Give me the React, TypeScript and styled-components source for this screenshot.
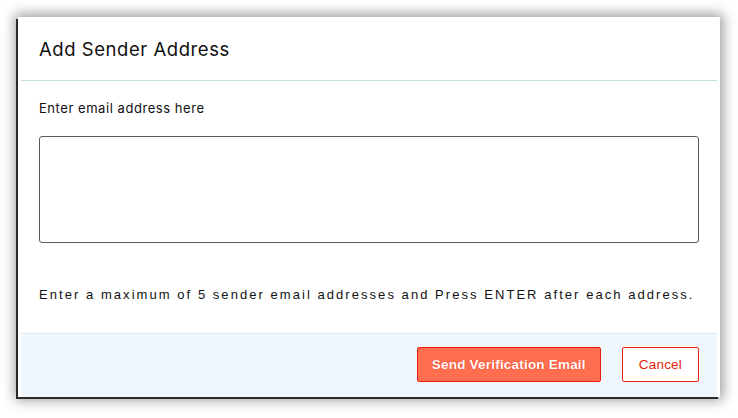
import React, { useState } from 'react';
import styled, { createGlobalStyle } from 'styled-components';

const GlobalStyle = createGlobalStyle`
  html, body {
    margin: 0;
    padding: 0;
    background: #ffffff;
  }
  body {
    font-family: 'Inter', 'Liberation Sans', sans-serif;
    color: #1d1d1d;
  }
`;

const Page = styled.div`
  padding: 17px 18px;
  width: 738px;
  height: 418px;
  box-sizing: border-box;
`;

const Dialog = styled.div`
  width: 702px;
  height: 380px;
  background: #ffffff;
  display: flex;
  flex-direction: column;
  box-shadow: -2px 2px 0 #2a2a2a, 0 0 12px 3px rgba(0, 0, 0, 0.4);
`;

const Header = styled.div`
  height: 63px;
  margin: 0 3px;
  padding: 0 18px;
  display: flex;
  align-items: center;
  border-bottom: 1px solid #bfe0e3;
`;

const Title = styled.h2`
  margin: 0;
  font-size: 18.5px;
  font-weight: 400;
  letter-spacing: 0.55px;
  color: #111;
`;

const Body = styled.div`
  flex: 1;
  padding: 19px 21px 0 21px;
  display: flex;
  flex-direction: column;
`;

const Label = styled.label`
  font-size: 13px;
  letter-spacing: 0.55px;
  color: #111;
  margin-bottom: 20px;
`;

const EmailBox = styled.textarea`
  width: 660px;
  height: 107px;
  box-sizing: border-box;
  border: 1px solid #5a5a5a;
  border-radius: 3px;
  resize: none;
  outline: none;
  font-family: inherit;
  font-size: 13px;
  padding: 8px;
`;

const Hint = styled.p`
  margin: 44px 0 0 0;
  font-family: 'Liberation Sans', Arial, sans-serif;
  font-size: 13px;
  letter-spacing: 2.05px;
  color: #111;
`;

const Footer = styled.div`
  height: 64px;
  margin: 0 3px;
  padding: 0 18px;
  box-sizing: border-box;
  background: #eff7fd;
  border-top: 1px solid #d8ecf8;
  display: flex;
  align-items: center;
  justify-content: flex-end;
  gap: 21px;
`;

const Button = styled.button<{ $primary?: boolean }>`
  height: 35px;
  padding: 0 ${(p) => (p.$primary ? '14px' : '16px')};
  margin-top: -2px;
  border-radius: 2px;
  border: 1px solid #e9210c;
  background: ${(p) => (p.$primary ? '#ff6e4e' : '#ffffff')};
  color: ${(p) => (p.$primary ? '#ffffff' : '#e9210c')};
  font-family: 'Liberation Sans', Arial, sans-serif;
  font-size: 13.5px;
  font-weight: ${(p) => (p.$primary ? 700 : 400)};
  letter-spacing: 0.2px;
  text-shadow: ${(p) => (p.$primary ? '0 0 1px #e9210c' : 'none')};
  cursor: pointer;
`;

const App = () => {
  const [emails, setEmails] = useState('');

  return (
    <Page>
      <GlobalStyle />
      <Dialog>
        <Header>
          <Title>Add Sender Address</Title>
        </Header>
        <Body>
          <Label htmlFor="sender-emails">Enter email address here</Label>
          <EmailBox
            id="sender-emails"
            value={emails}
            onChange={(e) => setEmails(e.target.value)}
          />
          <Hint>
            Enter a maximum of 5 sender email addresses and Press ENTER after each address.
          </Hint>
        </Body>
        <Footer>
          <Button $primary>Send Verification Email</Button>
          <Button>Cancel</Button>
        </Footer>
      </Dialog>
    </Page>
  );
};

export default App;
